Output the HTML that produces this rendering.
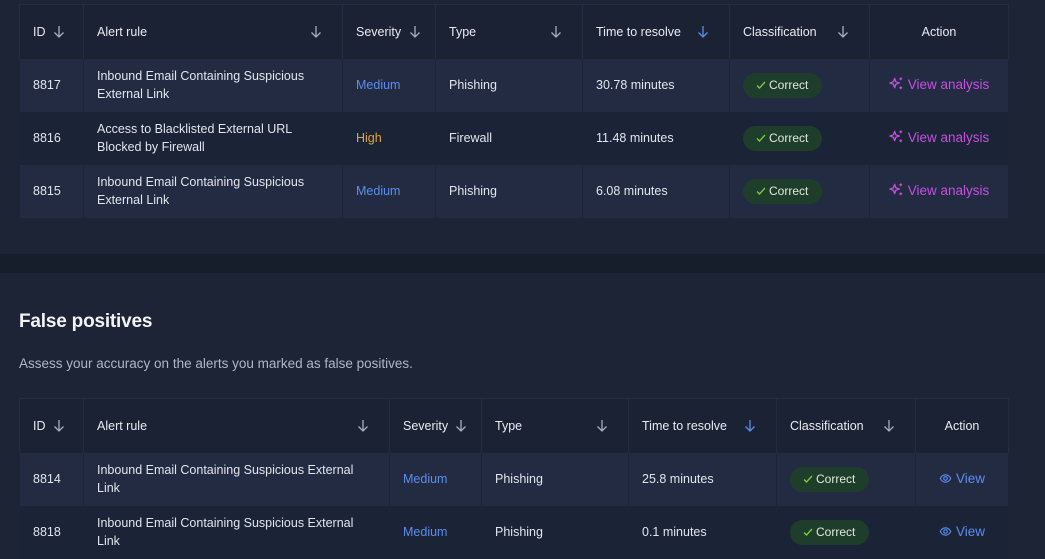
<!DOCTYPE html>
<html><head><style>
*{margin:0;padding:0;box-sizing:border-box}
body{width:1045px;height:552px;overflow:hidden;background:#1c2436;font-family:"Liberation Sans",sans-serif;color:#e1e5ec;font-size:12.5px;position:relative}
table{position:absolute;left:19px;border-collapse:collapse;table-layout:fixed;width:989px}
th{background:#1a2234;height:54px;text-align:left;font-weight:normal;padding:0 13px;border:1px solid #232c40;border-bottom:none;position:relative;color:#e8ebf0}
th svg.ar{position:absolute;top:20px}
td{height:53px;padding:0 13px;line-height:18px;border-right:1px solid #1c2437;border-left:1px solid #1c2437}
tr.o td{background:#222b42}
tr.e td{background:#1b2337}
.m{color:#5b8def}.h{color:#e0a63a}
.b{display:inline-block;background:#1f3d2b;border-radius:13px;height:25px;line-height:25px;padding:0 14px 0 13px;color:#dfe8df;font-size:12px}
.b svg{vertical-align:-1px;margin-right:3px}
.va{color:#c64fe0;font-size:13.5px}
.vv{color:#5b8def;font-size:13.5px}
.va svg,.vv svg{vertical-align:-2px;margin-right:4px}
.band{position:absolute;left:0;top:254px;width:1045px;height:19px;background:#161d2b}
h2{position:absolute;left:19px;top:311px;font-size:19px;font-weight:bold;color:#f2f4f7;letter-spacing:-0.2px}
p{position:absolute;left:19px;top:356px;font-size:13.5px;color:#b0b7c3}
</style></head><body>
<svg width="0" height="0" style="position:absolute"><defs>
<symbol id="a" viewBox="0 0 12 14"><path d="M6 1v11M1.5 7.5L6 12l4.5-4.5" fill="none" stroke="currentColor" stroke-width="1.3"/></symbol>
<symbol id="s" viewBox="0 0 16 16"><path d="M6 2.5l1.3 3.7 3.7 1.3-3.7 1.3L6 12.5 4.7 8.8 1 7.5l3.7-1.3z" fill="none" stroke="currentColor" stroke-width="1.4" stroke-linejoin="round"/><path d="M12.5 1.5v3M11 3h3M12.5 11v3M11 12.5h3" stroke="currentColor" stroke-width="1.3"/></symbol>
<symbol id="e" viewBox="0 0 16 16"><path d="M1.5 8c2-3.5 4-4.5 6.5-4.5S12.5 4.5 14.5 8c-2 3.5-4 4.5-6.5 4.5S3.5 11.5 1.5 8z" fill="none" stroke="currentColor" stroke-width="1.4"/><circle cx="8" cy="8" r="2.2" fill="none" stroke="currentColor" stroke-width="1.4"/></symbol>
<symbol id="c" viewBox="0 0 10 10"><path d="M1 5.5l2.5 2.5L9 2" fill="none" stroke="#7ccf3a" stroke-width="1.3"/></symbol>
</defs></svg>
<table style="top:4px">
<colgroup><col style="width:64px"><col style="width:259px"><col style="width:93px"><col style="width:147px"><col style="width:147px"><col style="width:140px"><col style="width:139px"></colgroup>
<tr><th>ID<svg class="ar" style="left:33px;color:#a7afbd" width="12" height="14"><use href="#a"/></svg></th><th>Alert rule<svg class="ar" style="right:20px;color:#a7afbd" width="12" height="14"><use href="#a"/></svg></th><th>Severity<svg class="ar" style="right:14px;color:#a7afbd" width="12" height="14"><use href="#a"/></svg></th><th>Type<svg class="ar" style="right:20px;color:#a7afbd" width="12" height="14"><use href="#a"/></svg></th><th>Time to resolve<svg class="ar" style="right:20px;color:#5b8def" width="12" height="14"><use href="#a"/></svg></th><th>Classification<svg class="ar" style="right:20px;color:#a7afbd" width="12" height="14"><use href="#a"/></svg></th><th style="text-align:center">Action</th></tr>
<tr class="o"><td>8817</td><td>Inbound Email Containing Suspicious External Link</td><td class="m">Medium</td><td>Phishing</td><td>30.78 minutes</td><td><span class="b"><svg width="10" height="10"><use href="#c"/></svg>Correct</span></td><td style="text-align:center"><span class="va"><svg width="15" height="15"><use href="#s"/></svg>View analysis</span></td></tr>
<tr class="e"><td>8816</td><td>Access to Blacklisted External URL Blocked by Firewall</td><td class="h">High</td><td>Firewall</td><td>11.48 minutes</td><td><span class="b"><svg width="10" height="10"><use href="#c"/></svg>Correct</span></td><td style="text-align:center"><span class="va"><svg width="15" height="15"><use href="#s"/></svg>View analysis</span></td></tr>
<tr class="o"><td>8815</td><td>Inbound Email Containing Suspicious External Link</td><td class="m">Medium</td><td>Phishing</td><td>6.08 minutes</td><td><span class="b"><svg width="10" height="10"><use href="#c"/></svg>Correct</span></td><td style="text-align:center"><span class="va"><svg width="15" height="15"><use href="#s"/></svg>View analysis</span></td></tr>
</table>
<div class="band"></div>
<h2>False positives</h2>
<p>Assess your accuracy on the alerts you marked as false positives.</p>
<table style="top:398px">
<colgroup><col style="width:64px"><col style="width:306px"><col style="width:92px"><col style="width:147px"><col style="width:148px"><col style="width:139px"><col style="width:93px"></colgroup>
<tr><th>ID<svg class="ar" style="left:33px;color:#a7afbd" width="12" height="14"><use href="#a"/></svg></th><th>Alert rule<svg class="ar" style="right:20px;color:#a7afbd" width="12" height="14"><use href="#a"/></svg></th><th>Severity<svg class="ar" style="right:14px;color:#a7afbd" width="12" height="14"><use href="#a"/></svg></th><th>Type<svg class="ar" style="right:20px;color:#a7afbd" width="12" height="14"><use href="#a"/></svg></th><th>Time to resolve<svg class="ar" style="right:20px;color:#5b8def" width="12" height="14"><use href="#a"/></svg></th><th>Classification<svg class="ar" style="right:20px;color:#a7afbd" width="12" height="14"><use href="#a"/></svg></th><th style="text-align:center">Action</th></tr>
<tr class="o"><td>8814</td><td>Inbound Email Containing Suspicious External Link</td><td class="m">Medium</td><td>Phishing</td><td>25.8 minutes</td><td><span class="b"><svg width="10" height="10"><use href="#c"/></svg>Correct</span></td><td style="text-align:center"><span class="vv"><svg width="13" height="13"><use href="#e"/></svg>View</span></td></tr>
<tr class="e"><td>8818</td><td>Inbound Email Containing Suspicious External Link</td><td class="m">Medium</td><td>Phishing</td><td>0.1 minutes</td><td><span class="b"><svg width="10" height="10"><use href="#c"/></svg>Correct</span></td><td style="text-align:center"><span class="vv"><svg width="13" height="13"><use href="#e"/></svg>View</span></td></tr>
</table>
</body></html>
